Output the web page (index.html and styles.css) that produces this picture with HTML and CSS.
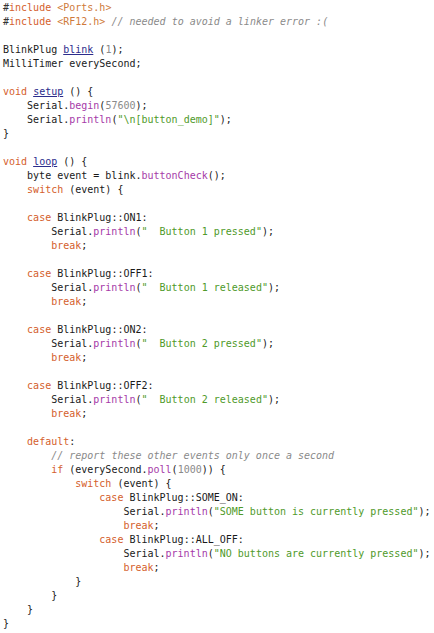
FILE: index.html
```html
<!DOCTYPE html>
<html>
<head>
<meta charset="utf-8">
<link rel="stylesheet" href="styles.css">
</head>
<body>
<pre class="code"><span class="pp">#</span><span class="kw">include</span> <span class="inc">&lt;Ports.h&gt;</span>
<span class="pp">#</span><span class="kw">include</span> <span class="inc">&lt;RF12.h&gt;</span> <span class="cm">// needed to avoid a linker error :(</span>

BlinkPlug <span class="def">blink</span> (<span class="num">1</span>);
MilliTimer everySecond;

<span class="kw">void</span> <span class="def">setup</span> () {
    Serial.<span class="fn">begin</span>(<span class="num">57600</span>);
    Serial.<span class="fn">println</span>(<span class="str">"\n[button_demo]"</span>);
}

<span class="kw">void</span> <span class="def">loop</span> () {
    byte event = blink.<span class="fn">buttonCheck</span>();
    <span class="kw">switch</span> (event) {

    <span class="kw">case</span> BlinkPlug::ON1:
        Serial.<span class="fn">println</span>(<span class="str">"  Button 1 pressed"</span>);
        <span class="kw">break</span>;

    <span class="kw">case</span> BlinkPlug::OFF1:
        Serial.<span class="fn">println</span>(<span class="str">"  Button 1 released"</span>);
        <span class="kw">break</span>;

    <span class="kw">case</span> BlinkPlug::ON2:
        Serial.<span class="fn">println</span>(<span class="str">"  Button 2 pressed"</span>);
        <span class="kw">break</span>;

    <span class="kw">case</span> BlinkPlug::OFF2:
        Serial.<span class="fn">println</span>(<span class="str">"  Button 2 released"</span>);
        <span class="kw">break</span>;

    <span class="kw">default</span>:
        <span class="cm">// report these other events only once a second</span>
        <span class="kw">if</span> (everySecond.<span class="fn">poll</span>(<span class="num">1000</span>)) {
            <span class="kw">switch</span> (event) {
                <span class="kw">case</span> BlinkPlug::SOME_ON:
                    Serial.<span class="fn">println</span>(<span class="str">"SOME button is currently pressed"</span>);
                    <span class="kw">break</span>;
                <span class="kw">case</span> BlinkPlug::ALL_OFF:
                    Serial.<span class="fn">println</span>(<span class="str">"NO buttons are currently pressed"</span>);
                    <span class="kw">break</span>;
            }
        }
    }
}</pre>
</body>
</html>
```
FILE: styles.css
```css
html, body {
  margin: 0;
  background: #ffffff;
}
body {
  padding: 1px 0 0 3px;
}
.code {
  margin: 0;
  font-family: "DejaVu Sans Mono", monospace;
  font-size: 10px;
  line-height: 14px;
  color: #1a1a1a;
  white-space: pre;
}
.pp { color: #333333; }
.kw { color: #d4602c; }
.inc { color: #cf7a3a; }
.cm { color: #8a8a8a; font-style: italic; }
.def { color: #2c2c8c; text-decoration: underline; }
.fn { color: #a63aa8; }
.str { color: #4f9a2a; }
.num { color: #8a8a8a; }
```
